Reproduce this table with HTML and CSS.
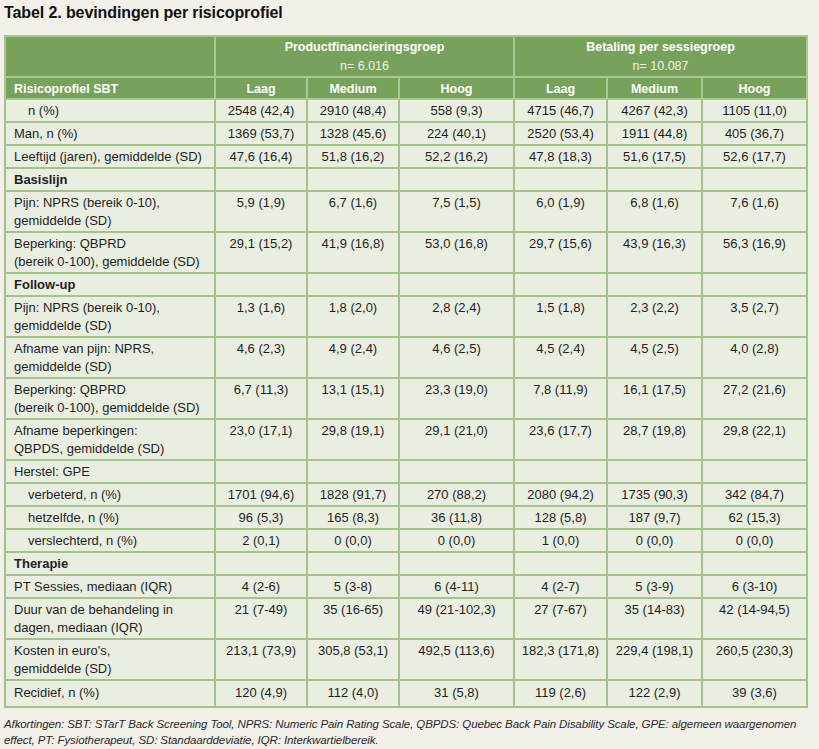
FILE: index.html
```html
<!DOCTYPE html>
<html lang="nl">
<head>
<meta charset="utf-8">
<title>Tabel 2</title>
<link rel="stylesheet" href="styles.css">
</head>
<body>
<div class="page">
  <h1 class="title">Tabel 2. bevindingen per risicoprofiel</h1>
  <table class="data">
    <colgroup>
      <col class="c-label"><col class="c-a"><col class="c-b"><col class="c-c"><col class="c-d"><col class="c-e"><col class="c-f">
    </colgroup>
    <thead>
      <tr class="h1">
        <th></th>
        <th colspan="3">Productfinancieringsgroep<span class="n">n= 6.016</span></th>
        <th colspan="3">Betaling per sessiegroep<span class="n">n= 10.087</span></th>
      </tr>
      <tr class="h2">
        <th class="lbl">Risicoprofiel SBT</th>
        <th>Laag</th><th>Medium</th><th>Hoog</th>
        <th>Laag</th><th>Medium</th><th>Hoog</th>
      </tr>
    </thead>
    <tbody>
      <tr><td class="ind">n (%)</td><td>2548 (42,4)</td><td>2910 (48,4)</td><td>558 (9,3)</td><td>4715 (46,7)</td><td>4267 (42,3)</td><td>1105 (11,0)</td></tr>
      <tr><td>Man, n (%)</td><td>1369 (53,7)</td><td>1328 (45,6)</td><td>224 (40,1)</td><td>2520 (53,4)</td><td>1911 (44,8)</td><td>405 (36,7)</td></tr>
      <tr><td>Leeftijd (jaren), gemiddelde (SD)</td><td>47,6 (16,4)</td><td>51,8 (16,2)</td><td>52,2 (16,2)</td><td>47,8 (18,3)</td><td>51,6 (17,5)</td><td>52,6 (17,7)</td></tr>
      <tr><td class="sec">Basislijn</td><td></td><td></td><td></td><td></td><td></td><td></td></tr>
      <tr><td>Pijn: NPRS (bereik 0-10),<br>gemiddelde (SD)</td><td>5,9 (1,9)</td><td>6,7 (1,6)</td><td>7,5 (1,5)</td><td>6,0 (1,9)</td><td>6,8 (1,6)</td><td>7,6 (1,6)</td></tr>
      <tr><td>Beperking: QBPRD<br>(bereik 0-100), gemiddelde (SD)</td><td>29,1 (15,2)</td><td>41,9 (16,8)</td><td>53,0 (16,8)</td><td>29,7 (15,6)</td><td>43,9 (16,3)</td><td>56,3 (16,9)</td></tr>
      <tr><td class="sec">Follow-up</td><td></td><td></td><td></td><td></td><td></td><td></td></tr>
      <tr><td>Pijn: NPRS (bereik 0-10),<br>gemiddelde (SD)</td><td>1,3 (1,6)</td><td>1,8 (2,0)</td><td>2,8 (2,4)</td><td>1,5 (1,8)</td><td>2,3 (2,2)</td><td>3,5 (2,7)</td></tr>
      <tr><td>Afname van pijn: NPRS,<br>gemiddelde (SD)</td><td>4,6 (2,3)</td><td>4,9 (2,4)</td><td>4,6 (2,5)</td><td>4,5 (2,4)</td><td>4,5 (2,5)</td><td>4,0 (2,8)</td></tr>
      <tr><td>Beperking: QBPRD<br>(bereik 0-100), gemiddelde (SD)</td><td>6,7 (11,3)</td><td>13,1 (15,1)</td><td>23,3 (19,0)</td><td>7,8 (11,9)</td><td>16,1 (17,5)</td><td>27,2 (21,6)</td></tr>
      <tr><td>Afname beperkingen:<br>QBPDS, gemiddelde (SD)</td><td>23,0 (17,1)</td><td>29,8 (19,1)</td><td>29,1 (21,0)</td><td>23,6 (17,7)</td><td>28,7 (19,8)</td><td>29,8 (22,1)</td></tr>
      <tr><td>Herstel: GPE</td><td></td><td></td><td></td><td></td><td></td><td></td></tr>
      <tr><td class="ind">verbeterd, n (%)</td><td>1701 (94,6)</td><td>1828 (91,7)</td><td>270 (88,2)</td><td>2080 (94,2)</td><td>1735 (90,3)</td><td>342 (84,7)</td></tr>
      <tr><td class="ind">hetzelfde, n (%)</td><td>96 (5,3)</td><td>165 (8,3)</td><td>36 (11,8)</td><td>128 (5,8)</td><td>187 (9,7)</td><td>62 (15,3)</td></tr>
      <tr><td class="ind">verslechterd, n (%)</td><td>2 (0,1)</td><td>0 (0,0)</td><td>0 (0,0)</td><td>1 (0,0)</td><td>0 (0,0)</td><td>0 (0,0)</td></tr>
      <tr><td class="sec">Therapie</td><td></td><td></td><td></td><td></td><td></td><td></td></tr>
      <tr><td>PT Sessies, mediaan (IQR)</td><td>4 (2-6)</td><td>5 (3-8)</td><td>6 (4-11)</td><td>4 (2-7)</td><td>5 (3-9)</td><td>6 (3-10)</td></tr>
      <tr><td>Duur van de behandeling in<br>dagen, mediaan (IQR)</td><td>21 (7-49)</td><td>35 (16-65)</td><td>49 (21-102,3)</td><td>27 (7-67)</td><td>35 (14-83)</td><td>42 (14-94,5)</td></tr>
      <tr><td>Kosten in euro's,<br>gemiddelde (SD)</td><td>213,1 (73,9)</td><td>305,8 (53,1)</td><td>492,5 (113,6)</td><td>182,3 (171,8)</td><td>229,4 (198,1)</td><td>260,5 (230,3)</td></tr>
      <tr class="last"><td>Recidief, n (%)</td><td>120 (4,9)</td><td>112 (4,0)</td><td>31 (5,8)</td><td>119 (2,6)</td><td>122 (2,9)</td><td>39 (3,6)</td></tr>
    </tbody>
  </table>
  <p class="note">Afkortingen: SBT: STarT Back Screening Tool, NPRS: Numeric Pain Rating Scale, QBPDS: Quebec Back Pain Disability Scale, GPE: algemeen waargenomen effect, PT: Fysiotherapeut, SD: Standaarddeviatie, IQR: Interkwartielbereik.</p>
</div>
</body>
</html>
```

FILE: styles.css
```css
* { box-sizing: border-box; }
html, body { margin: 0; padding: 0; }
body {
  background: #f3efe9;
  font-family: "Liberation Sans", Arial, sans-serif;
  color: #1f1f1f;
  width: 819px;
  height: 749px;
  overflow: hidden;
}
.page {
  padding: 4px 13px 0 4px;
}
.title {
  margin: 0;
  font-size: 16px;
  font-weight: bold;
  line-height: 18px;
  height: 31px;
  letter-spacing: -0.1px;
  color: #111;
}
.data {
  width: 802px;
  table-layout: fixed;
  border-collapse: collapse;
  font-size: 12.5px;
  line-height: 18px;
}
.c-label { width: 210px; }
.c-a { width: 92px; }
.c-b { width: 92px; }
.c-c { width: 115px; }
.c-d { width: 93px; }
.c-e { width: 95px; }
.c-f { width: 105px; }
.data th, .data td {
  border: 2px solid #a4c38b;
  vertical-align: top;
}
.data thead th {
  background: #78a25b;
  color: #fff;
  font-weight: bold;
  text-align: center;
  border-color: #a9c793;
}
.h1 th {
  padding: 1px 4px 0;
  height: 38px;
  line-height: 19px;
}
.h1 th .n {
  display: block;
  font-weight: normal;
  color: #eef3e8;
}
.h2 th {
  padding: 2px 4px 0;
  height: 22px;
}
.h2 th.lbl { text-align: left; padding-left: 8px; }
.data td {
  background: #e9eee0;
  padding: 2px 4px 1px;
  font-size: 13px;
  text-align: center;
}
.data td:first-child {
  text-align: left;
  padding-left: 8px;
  padding-right: 2px;
}
.data td.ind { padding-left: 22px; }
.data td.sec { font-weight: bold; }
.data tr.last td { padding-top: 3px; padding-bottom: 4px; }
.note {
  margin: 8px 0 0;
  width: 802px;
  font-size: 11.5px;
  line-height: 16px;
  font-style: italic;
  letter-spacing: -0.1px;
  color: #2a2a2a;
}
```
